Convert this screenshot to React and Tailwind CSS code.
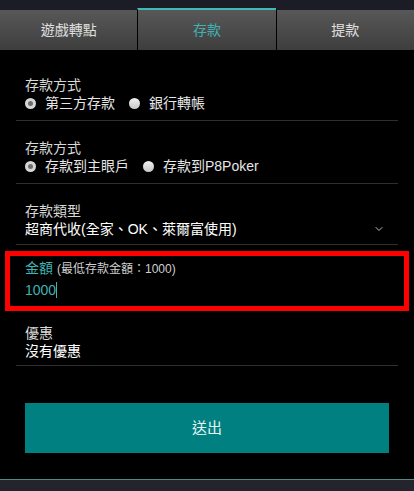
import { ChevronDown } from 'lucide-react';

const font = { fontFamily: '"Liberation Sans", "Noto Sans CJK TC", sans-serif' };

function Radio({ checked, label }) {
    return (
        <label className="flex items-center gap-[9px] mr-[14px]">
            {checked ? (
                <span className="w-[11px] h-[11px] rounded-full bg-[#d6d6d6] flex items-center justify-center">
                    <span className="w-[5px] h-[5px] rounded-full bg-[#6e6e6e]" />
                </span>
            ) : (
                <span className="w-[11px] h-[11px] rounded-full bg-gradient-to-b from-[#f2f2f2] to-[#c8c8c8]" />
            )}
            <span className="text-[#e6e6e6]">{label}</span>
        </label>
    );
}

function Section({ children, className = '' }) {
    return (
        <div className={`mx-[16px] px-[9px] border-b border-[#2f2f2f] ${className}`}>
            {children}
        </div>
    );
}

export default function App() {
    const tabs = ['遊戲轉點', '存款', '提款'];
    const active = 1;

    return (
        <div className="w-[414px] h-[491px] bg-black flex flex-col text-[14px] leading-[18px]" style={font}>
            {/* barra superior */}
            <div className="h-[8px] bg-[#1c1c26]" />

            {/* pestañas */}
            <div className="flex h-[42px]">
                {tabs.map((t, i) => (
                    <div
                        key={t}
                        className={`flex-1 flex items-center justify-center bg-gradient-to-b from-[#585858] to-[#3e3e3e] ${i === active ? 'border-t-2 border-[#3fb8b8] text-[#3fb3b3]' : 'border-t-2 border-[#1c1c26] text-[#e0e0e0]'} ${i > 0 ? 'border-l border-l-black' : ''}`}
                    >
                        {t}
                    </div>
                ))}
            </div>

            <div className="pt-[8px]">
                <Section className="pt-[18px] pb-[8px]">
                    <div className="text-[#d8d8d8]">存款方式</div>
                    <div className="flex">
                        <Radio checked label="第三方存款" />
                        <Radio label="銀行轉帳" />
                    </div>
                </Section>

                <Section className="pt-[18px] pb-[8px]">
                    <div className="text-[#d8d8d8]">存款方式</div>
                    <div className="flex">
                        <Radio checked label="存款到主眼戶" />
                        <Radio label="存款到P8Poker" />
                    </div>
                </Section>

                <Section className="pt-[18px] pb-[6px]">
                    <div className="text-[#d8d8d8]">存款類型</div>
                    <div className="flex items-center justify-between text-white">
                        <span>超商代收(全家、OK、萊爾富使用)</span>
                        <ChevronDown size={12} strokeWidth={2} className="text-[#bbbbbb] mr-[4px]" />
                    </div>
                </Section>

                {/* campo monto */}
                <div className="mx-[5px] mt-[6px] h-[60px] border-[5px] border-[#ff0000] px-[15px] pt-[3px]">
                    <div className="flex items-baseline gap-[4px]">
                        <span className="text-[#3fb3b3]">金額</span>
                        <span className="text-[#cfcfcf] text-[12px]">(最低存款金額：1000)</span>
                    </div>
                    <div className="text-[#3fb3b3] mt-[3px] flex items-center">
                        1000<span className="inline-block w-[1px] h-[16px] bg-[#3fb3b3]" />
                    </div>
                </div>

                <Section className="pt-[13px] pb-[5px]">
                    <div className="text-[#d8d8d8]">優惠</div>
                    <div className="text-white">沒有優惠</div>
                </Section>

                <div className="px-[25px] pt-[37px]">
                    <button className="w-full h-[50px] bg-[#008080] text-[#e8f4f4] text-[15px]">送出</button>
                </div>
            </div>

            <div className="flex-1" />
            <div className="h-[1px] bg-[#4a8c8e]" />
            <div className="h-[11px] bg-[#24242c]" />
        </div>
    );
}
